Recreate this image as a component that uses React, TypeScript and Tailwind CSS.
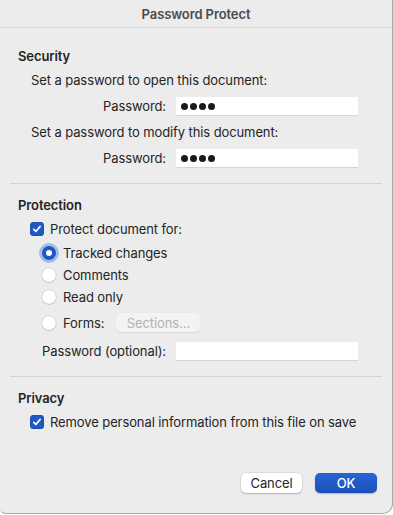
import React from 'react';

function Checkbox() {
  return (
    <span className="w-[14px] h-[14px] rounded-[3.5px] bg-[#1f57c3] flex items-center justify-center shrink-0 shadow-[inset_0_0_0_0.5px_rgba(0,0,0,0.2)]">
      <svg viewBox="0 0 14 14" className="w-[12px] h-[12px]" fill="none" stroke="white" strokeWidth="2" strokeLinecap="round" strokeLinejoin="round">
        <path d="M3.3 7.4l2.4 2.5 5-6" />
      </svg>
    </span>
  );
}

function Radio({ checked = false }: { checked?: boolean }) {
  if (checked) {
    return (
      <span className="w-[14px] h-[14px] rounded-full bg-[#1f57c3] flex items-center justify-center shrink-0 shadow-[0_0_0_3px_rgba(80,130,220,0.45)]">
        <span className="w-[6px] h-[6px] rounded-full bg-white" />
      </span>
    );
  }
  return (
    <span className="w-[14px] h-[14px] rounded-full bg-white shrink-0 shadow-[0_0_0_0.5px_rgba(0,0,0,0.15),0_0.5px_1px_rgba(0,0,0,0.2)]" />
  );
}

function Field({ dots = false }: { dots?: boolean }) {
  return (
    <div className="w-[182px] h-[18px] bg-white shadow-[0_0.5px_0_rgba(0,0,0,0.18)] flex items-center pl-[5px] gap-[2px]">
      {dots && (
        <>
          <span className="w-[7px] h-[7px] rounded-full bg-[#1a1a1a]" />
          <span className="w-[7px] h-[7px] rounded-full bg-[#1a1a1a]" />
          <span className="w-[7px] h-[7px] rounded-full bg-[#1a1a1a]" />
          <span className="w-[7px] h-[7px] rounded-full bg-[#1a1a1a]" />
        </>
      )}
    </div>
  );
}

export default function App() {
  return (
    <div className="w-[393px] h-[515px] bg-white">
      <div
        className="w-[393px] h-[514px] bg-[#ececec] border-r border-b border-[#a9a9a9] rounded-br-[10px] rounded-bl-[6px] text-[13px] tracking-[-0.1px] text-[#242424] leading-[16px] flex flex-col"
        style={{ fontFamily: 'Inter, "Noto Sans", sans-serif' }}
      >
        {/* Title bar */}
        <div className="h-[28px] border-b border-[#d4d4d4] flex items-center justify-center font-semibold text-[#4b4b4b]">
          Password Protect
        </div>

        {/* Security */}
        <div className="px-[18px] pt-[20px] flex flex-col">
          <div className="h-[16px] font-semibold">Security</div>
          <div className="h-[16px] mt-[8px] pl-[13px]">Set a password to open this document:</div>
          <div className="h-[18px] mt-[9px] flex items-center">
            <span className="w-[158px] text-right pr-[10px]">Password:</span>
            <Field dots />
          </div>
          <div className="h-[16px] mt-[9px] pl-[13px]">Set a password to modify this document:</div>
          <div className="h-[18px] mt-[9px] flex items-center">
            <span className="w-[158px] text-right pr-[10px]">Password:</span>
            <Field dots />
          </div>
        </div>

        <div className="mx-[10px] mt-[16px] h-px bg-[#d4d4d4]" />

        {/* Protection */}
        <div className="px-[18px] pt-[13px] flex flex-col">
          <div className="h-[16px] font-semibold">Protection</div>
          <div className="h-[16px] mt-[8px] pl-[12px] flex items-center gap-[6px]">
            <Checkbox />
            <span>Protect document for:</span>
          </div>
          <div className="flex flex-col pl-[24px]">
            <div className="h-[16px] mt-[8px] flex items-center gap-[7px]">
              <Radio checked />
              <span>Tracked changes</span>
            </div>
            <div className="h-[16px] mt-[6px] flex items-center gap-[7px]">
              <Radio />
              <span>Comments</span>
            </div>
            <div className="h-[16px] mt-[6px] flex items-center gap-[7px]">
              <Radio />
              <span>Read only</span>
            </div>
            <div className="h-[19px] mt-[8px] flex items-center gap-[7px]">
              <Radio />
              <span>Forms:</span>
              <span className="ml-[5px] w-[84px] h-[19px] rounded-[5px] bg-[#f3f3f3] text-[#b2b2b2] flex items-center justify-center shadow-[0_0.5px_1px_rgba(0,0,0,0.08)]">
                Sections...
              </span>
            </div>
            <div className="h-[18px] mt-[10px] flex items-center">
              <span className="w-[134px]">Password (optional):</span>
              <Field />
            </div>
          </div>
        </div>

        <div className="mx-[10px] mt-[16px] h-px bg-[#d4d4d4]" />

        {/* Privacy */}
        <div className="px-[18px] pt-[13px] flex flex-col">
          <div className="h-[16px] font-semibold">Privacy</div>
          <div className="h-[16px] mt-[8px] pl-[12px] flex items-center gap-[6px]">
            <Checkbox />
            <span>Remove personal information from this file on save</span>
          </div>
        </div>

        {/* Buttons */}
        <div className="mt-[43px] pr-[15px] flex justify-end gap-[13px]">
          <button className="w-[61px] h-[20px] rounded-[5px] bg-white text-[#262626] shadow-[0_0_0_0.5px_rgba(0,0,0,0.12),0_1px_1.5px_rgba(0,0,0,0.2)] flex items-center justify-center">
            Cancel
          </button>
          <button className="w-[62px] h-[20px] rounded-[5px] bg-gradient-to-b from-[#2766d8] to-[#1c4fb8] text-white font-medium shadow-[0_1px_1.5px_rgba(0,0,0,0.25)] flex items-center justify-center">
            OK
          </button>
        </div>
      </div>
    </div>
  );
}
